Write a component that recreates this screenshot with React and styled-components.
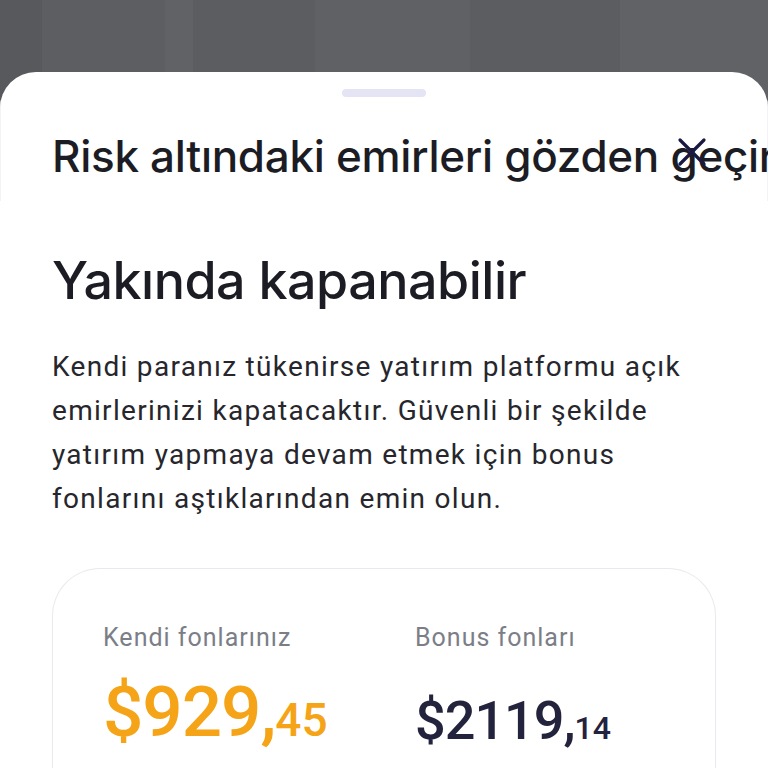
import React from "react";
import styled, { createGlobalStyle } from "styled-components";

const Global = createGlobalStyle`
  html, body { margin: 0; padding: 0; }
  body {
    width: 768px; height: 768px; overflow: hidden;
    background: #5b5c5f;
    font-family: Roboto, "Noto Sans", sans-serif;
  }
`;

const Backdrop = styled.div`
  width: 768px;
  height: 768px;
  padding-top: 72px;
  box-sizing: border-box;
  background:
    linear-gradient(90deg,
      #58595c 0 42px, #5d5e61 42px 165px, #616265 165px 193px,
      #5c5d60 193px 315px, #606164 315px 470px, #5c5d60 470px 620px,
      #616265 620px 768px);
  overflow: hidden;
`;

const Sheet = styled.div`
  position: relative;
  background: #ffffff;
  border-radius: 36px 36px 0 0;
  height: 100%;
  overflow: hidden;
`;

const Handle = styled.div`
  width: 84px;
  height: 8px;
  border-radius: 4px;
  background: #e5e4f5;
  margin: 17px auto 0;
`;

const Header = styled.div`
  position: relative;
  height: 104px;
  padding: 0 0 0 51px;
  box-sizing: border-box;
  border-left: 1px solid #f3f3f5;
  border-right: 1px solid #f3f3f5;
`;

const SheetTitle = styled.h1`
  margin: 0;
  padding-top: 32px;
  font-family: Inter, sans-serif;
  font-weight: 500;
  font-size: 44px;
  line-height: 54px;
  letter-spacing: -0.3px;
  color: #1c1c24;
  white-space: nowrap;
`;

const CloseButton = styled.button`
  position: absolute;
  left: 674px;
  top: 38px;
  width: 34px;
  height: 34px;
  padding: 0;
  border: none;
  background: transparent;
  display: flex;
  align-items: center;
  justify-content: center;
`;

const Content = styled.div`
  padding: 50px 52px 0;
`;

const Heading = styled.h2`
  margin: 0;
  font-family: Inter, sans-serif;
  font-weight: 500;
  font-size: 52px;
  line-height: 60px;
  letter-spacing: -0.5px;
  color: #1c1c24;
`;

const Body = styled.p`
  margin: 34px 0 0;
  font-family: Roboto, sans-serif;
  font-size: 28px;
  line-height: 44px;
  letter-spacing: 1.3px;
  color: #26262c;
`;

const Card = styled.div`
  margin-top: 47px;
  width: 664px;
  box-sizing: border-box;
  height: 240px;
  border: 1.5px solid #e8e8ef;
  border-bottom: none;
  border-radius: 48px 48px 0 0;
  padding: 53px 50px 0;
  display: grid;
  grid-template-columns: 312px 1fr;
`;

const Col = styled.div`
  display: flex;
  flex-direction: column;
`;

const Label = styled.div`
  font-family: Roboto, sans-serif;
  font-size: 25px;
  line-height: 32px;
  letter-spacing: 1px;
  color: #7b7e87;
`;

const Amount = styled.div`
  margin-top: ${(p) => (p.$big ? "22px" : "40px")};
  font-family: Roboto, sans-serif;
  font-weight: 500;
  font-size: ${(p) => (p.$big ? "71px" : "54px")};
  line-height: 1;
  letter-spacing: -1px;
  color: ${(p) => p.$color};
  white-space: nowrap;
`;

const Cents = styled.span`
  font-size: ${(p) => p.$size};
  letter-spacing: 0;
`;

export default function App() {
  return (
    <>
      <Global />
      <Backdrop>
        <Sheet>
          <Handle />
          <Header>
            <SheetTitle>Risk altındaki emirleri gözden geçir</SheetTitle>
            <CloseButton aria-label="Kapat">
              <svg width="30" height="30" viewBox="0 0 30 30">
                <path d="M3 3 L27 27 M27 3 L3 27" stroke="#1a1840" strokeWidth="3.2" strokeLinecap="round" />
              </svg>
            </CloseButton>
          </Header>
          <Content>
            <Heading>Yakında kapanabilir</Heading>
            <Body>
              Kendi paranız tükenirse yatırım platformu açık emirlerinizi kapatacaktır. Güvenli bir şekilde yatırım yapmaya devam etmek için bonus fonlarını aştıklarından emin olun.
            </Body>
            <Card>
              <Col>
                <Label>Kendi fonlarınız</Label>
                <Amount $big $color="#f5a417">
                  $929,<Cents $size="46px">45</Cents>
                </Amount>
              </Col>
              <Col>
                <Label>Bonus fonları</Label>
                <Amount $color="#23233d">
                  $2119,<Cents $size="32px">14</Cents>
                </Amount>
              </Col>
            </Card>
          </Content>
        </Sheet>
      </Backdrop>
    </>
  );
}
